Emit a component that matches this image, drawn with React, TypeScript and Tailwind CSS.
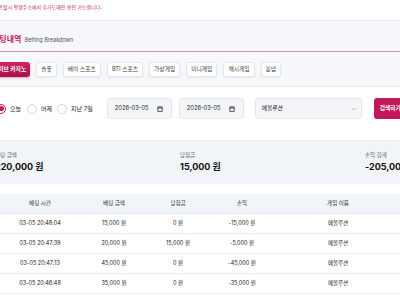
import React from "react";

const tabs = ["라이브 카지노", "슬롯", "베이 스포츠", "BTI 스포츠", "가상게임", "미니게임", "해시게임", "홀덤"];

const rows = [
  ["03-05 20:48:04", "15,000 원", "0 원", "-15,000 원", "에볼루션"],
  ["03-05 20:47:39", "20,000 원", "15,000 원", "-5,000 원", "에볼루션"],
  ["03-05 20:47:13", "45,000 원", "0 원", "-45,000 원", "에볼루션"],
  ["03-05 20:46:48", "35,000 원", "0 원", "-35,000 원", "에볼루션"],
];

function Cal() {
  return (
    <svg width="6" height="6" viewBox="0 0 12 12" fill="none" stroke="#222" strokeWidth="1.4">
      <rect x="1.5" y="2" width="9" height="9" rx="0.5" />
      <line x1="1.5" y1="4.5" x2="10.5" y2="4.5" />
      <line x1="4" y1="0.5" x2="4" y2="2.5" />
      <line x1="8" y1="0.5" x2="8" y2="2.5" />
    </svg>
  );
}

function DateBox({ ml }: { ml: string }) {
  return (
    <div className={`${ml} shrink-0 w-[65px] h-[21px] rounded-[3px] bg-[#f3f5f9] border border-[#e4e7ee] flex items-center justify-between pl-[7px] pr-[8px]`}>
      <span className="text-[5.75px] text-[#222]">2026-03-05</span>
      <Cal />
    </div>
  );
}

export default function App() {
  return (
    <div className="w-[400px] h-[300px] overflow-hidden bg-white font-['Inter','Noto_Sans_CJK_KR',sans-serif]">
      {/* notice */}
      <div className="h-[21px] border-b border-[#e6e8f0] pt-[4px] overflow-hidden">
        <p className="ml-[-17px] text-[5px] leading-[6px] text-[#c8245f] whitespace-nowrap">
          접속이 안될시 평생주소에서 추가도메인 확인 가능합니다.
        </p>
      </div>

      {/* title */}
      <div className="h-[31px] bg-[#f7f8fb] border-b border-[#d88ba3] flex items-center pt-[6px] overflow-hidden">
        <div className="ml-[-8px] flex items-baseline whitespace-nowrap shrink-0">
          <span className="text-[8px] font-bold text-[#c2185b]">베팅내역</span>
          <span className="ml-[3px] text-[5.5px] text-[#555]">Betting Breakdown</span>
        </div>
      </div>

      {/* tabs */}
      <div className="h-[35px] bg-[#f7f8fb] border-b border-[#e8eaf1] flex items-center overflow-hidden">
        <div className="ml-[-11px] flex items-center gap-[6px] whitespace-nowrap shrink-0">
          {tabs.map((t, i) =>
            i === 0 ? (
              <div
                key={t}
                className="h-[15px] px-[4px] rounded-[3px] bg-gradient-to-b from-[#d4225f] to-[#a51349] text-white font-semibold text-[5.75px] flex items-center shadow-[0_1px_2px_rgba(160,20,70,0.35)]"
              >
                {t}
              </div>
            ) : (
              <div
                key={t}
                className="h-[15px] px-[4px] rounded-[3px] bg-white border border-[#e2e6f0] text-[#444] text-[5.75px] flex items-center shadow-[0_1px_2px_rgba(60,80,140,0.08)]"
              >
                {t}
              </div>
            )
          )}
        </div>
      </div>

      {/* filters */}
      <div className="h-[54px] bg-white border-b border-[#e9ecf2] pt-[11px] overflow-hidden">
        <div className="flex items-center h-[21px] whitespace-nowrap">
          <div className="ml-[-4px] shrink-0 w-[10px] h-[10px] rounded-full border border-[#c2185b] bg-white flex items-center justify-center">
            <div className="w-[5px] h-[5px] rounded-full bg-[#c2185b]" />
          </div>
          <span className="ml-[4px] shrink-0 text-[6px] text-[#222]">오늘</span>
          <div className="ml-[6px] shrink-0 w-[10px] h-[10px] rounded-full border border-[#d3d6de] bg-white" />
          <span className="ml-[4px] shrink-0 text-[6px] text-[#222]">어제</span>
          <div className="ml-[5px] shrink-0 w-[10px] h-[10px] rounded-full border border-[#d3d6de] bg-white" />
          <span className="ml-[4px] shrink-0 text-[6px] text-[#222]">지난 7일</span>
          <DateBox ml="ml-[14px]" />
          <DateBox ml="ml-[7px]" />
          <div className="ml-[11px] shrink-0 w-[107px] h-[21px] rounded-[3px] bg-[#f3f5f9] border border-[#e4e7ee] flex items-center justify-between pl-[6px] pr-[5px]">
            <span className="text-[5.75px] text-[#222]">에볼루션</span>
            <svg width="5" height="4" viewBox="0 0 10 6" fill="none" stroke="#999" strokeWidth="1.3">
              <path d="M1 1l4 4 4-4" />
            </svg>
          </div>
          <div className="ml-[12px] shrink-0 w-[40px] h-[21px] rounded-[3px] bg-[#c2185b] flex items-center pl-[6px]">
            <span className="text-[5.75px] font-semibold text-white">검색하기</span>
          </div>
        </div>
      </div>

      {/* summary */}
      <div className="h-[43px] bg-[#f1f4f8] flex whitespace-nowrap overflow-hidden">
        <div className="ml-[-5px] flex shrink-0">
          {[
            ["베팅 금액", "220,000 원"],
            ["당첨금", "15,000 원"],
            ["손익 합계", "-205,000 원"],
          ].map(([l, v]) => (
            <div key={l} className="w-[185px] shrink-0 pt-[11px]">
              <div className="text-[5.5px] leading-[7px] text-[#666]">{l}</div>
              <div className="mt-[3px] text-[9px] leading-[10px] font-bold text-[#111]">{v}</div>
            </div>
          ))}
        </div>
      </div>

      <div className="h-[10px]" />

      {/* table */}
      <div className="grid grid-cols-[80px_68px_60px_68px_124px] h-[20px] bg-[#f1f4f8] border-b border-[#e4e7ef] items-center text-[5.5px] text-[#333] text-center">
        <div>베팅 시간</div>
        <div>베팅 금액</div>
        <div>당첨금</div>
        <div>손익</div>
        <div>게임 이름</div>
      </div>
      {rows.map((r) => (
        <div
          key={r[0]}
          className="grid grid-cols-[80px_68px_60px_68px_124px] h-[20px] border-b border-[#eceef4] items-center text-[5.5px] text-[#222] text-center"
        >
          {r.map((c, j) => (
            <div key={j}>{c}</div>
          ))}
        </div>
      ))}
    </div>
  );
}
